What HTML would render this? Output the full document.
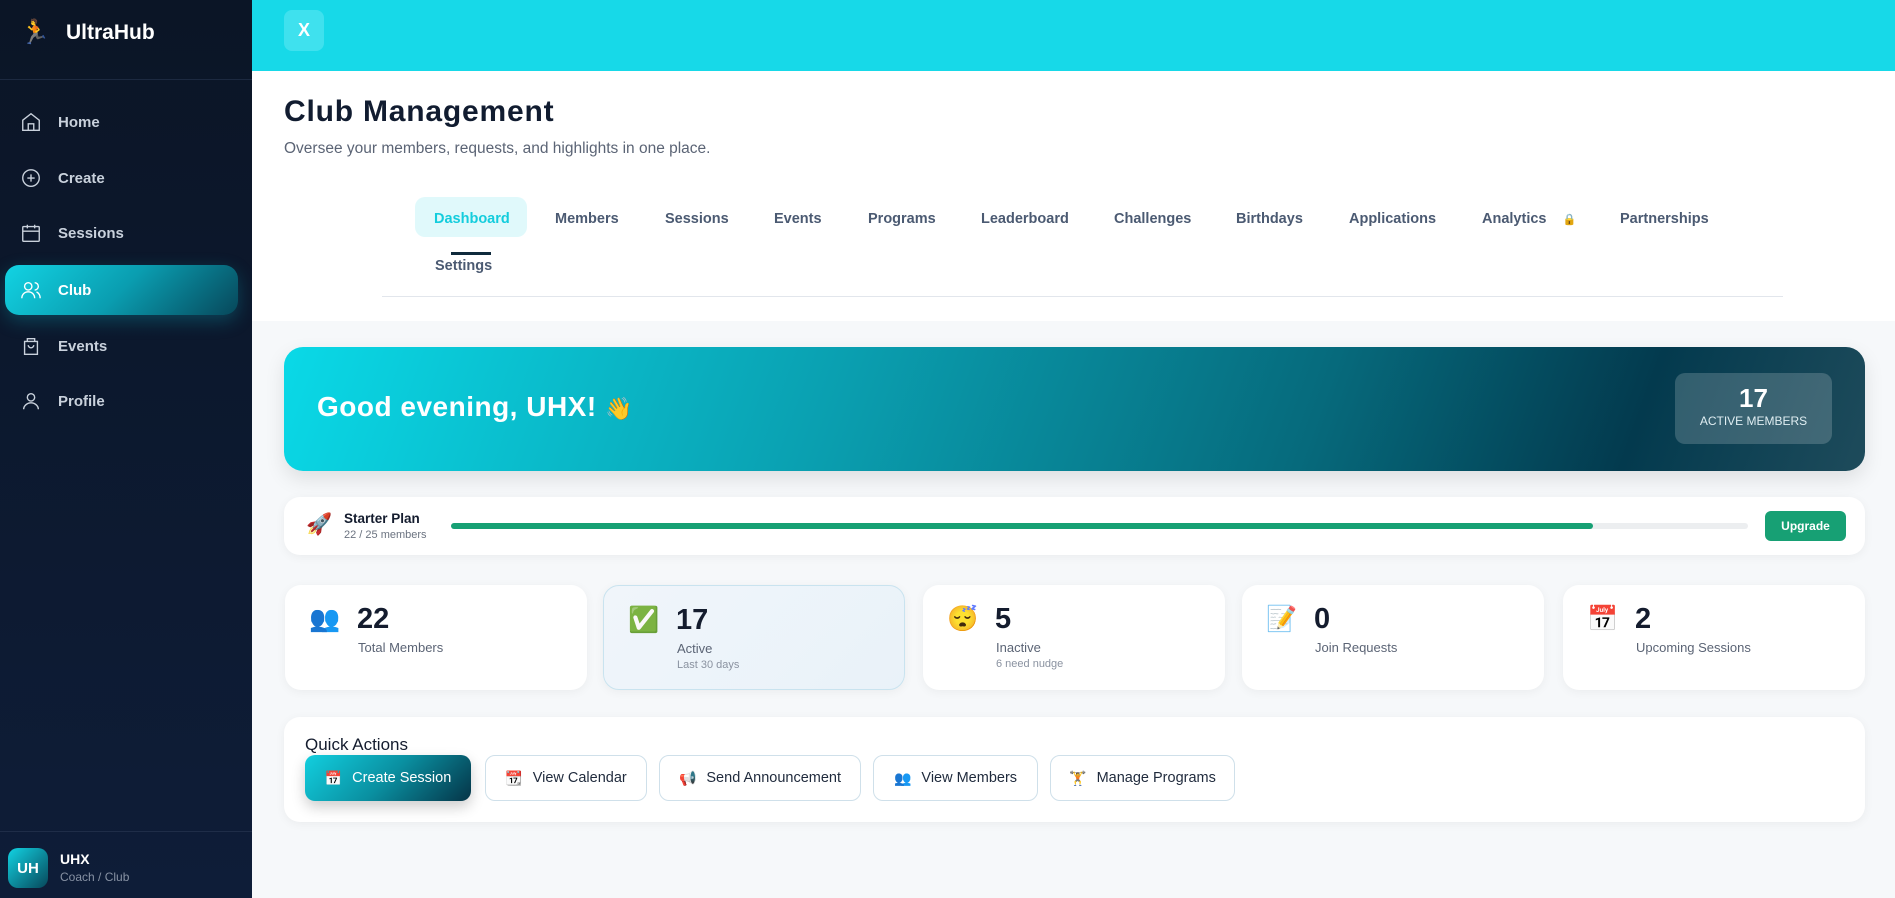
<!DOCTYPE html>
<html><head><meta charset="utf-8"><style>
*{box-sizing:border-box;margin:0;padding:0}
body{width:1895px;height:898px;overflow:hidden;background:#f6f8fa;font-family:"Liberation Sans",sans-serif;position:relative}
.a{position:absolute}
#sb{left:0;top:0;width:252px;height:898px;background:linear-gradient(180deg,#0b1526,#0e1d38)}
.nav{position:absolute;left:20px;color:#c9d1dc;font-weight:bold;font-size:15px;display:flex;align-items:center;gap:16px}
.nav svg{width:22px;height:22px;stroke:#c9d1dc;fill:none;stroke-width:1.5}
.tab{position:absolute;top:211px;font-size:14.5px;font-weight:bold;color:#4b5a72}
.card{position:absolute;background:#fff;border-radius:16px;box-shadow:0 2px 10px rgba(0,0,0,.05)}
.stat{top:585px;width:302px;height:105px}
.stat .ic{position:absolute;left:24px;top:20px;font-size:25px;font-family:"Noto Color Emoji","DejaVu Sans",sans-serif}
.stat .n{position:absolute;left:72px;top:18px;font-size:29px;font-weight:bold;color:#141c2e}
.stat .l{position:absolute;left:73px;top:55px;font-size:13px;color:#5b6475}
.stat .s{position:absolute;left:73px;top:73px;font-size:11px;color:#8a92a0}
.btn{position:absolute;top:755px;height:46px;border:1px solid #cfe0ea;border-radius:10px;background:#fff;display:flex;align-items:center;justify-content:center;gap:10px;font-size:14.5px;color:#1f2a3c}
</style></head><body>
<div id="sb" class="a">
 <div class="a" style="left:20px;top:18px;font-size:24px">🏃</div>
 <div class="a" style="left:66px;top:21px;color:#fff;font-weight:bold;font-size:21px">UltraHub</div>
 <div class="a" style="left:0;top:79px;width:252px;height:1px;background:#1c2940"></div>
 <div class="nav" style="top:111px"><svg viewBox="0 0 24 24"><path d="M3 10l9-7 9 7v11H3z"/><path d="M9 21v-7h6v7"/></svg>Home</div>
 <div class="nav" style="top:167px"><svg viewBox="0 0 24 24"><circle cx="12" cy="12" r="9"/><path d="M12 8v8M8 12h8"/></svg>Create</div>
 <div class="nav" style="top:222px"><svg viewBox="0 0 24 24"><rect x="3" y="5" width="18" height="16" rx="1"/><path d="M3 10h18M8 3v4M16 3v4"/></svg>Sessions</div>
 <div class="a" style="left:5px;top:265px;width:233px;height:50px;border-radius:14px;background:linear-gradient(135deg,#12d3e3 0%,#0a9db0 50%,#07475a 100%);box-shadow:0 6px 18px rgba(10,200,220,.25)"></div>
 <div class="nav" style="top:279px;color:#fff"><svg viewBox="0 0 24 24" style="stroke:#fff"><circle cx="9" cy="8" r="4"/><path d="M2 21c0-4 3-7 7-7s7 3 7 7M16 4a4 4 0 010 8M18 14c2 1 4 3 4 7"/></svg>Club</div>
 <div class="nav" style="top:335px"><svg viewBox="0 0 24 24"><path d="M5 7h14v14H5zM8 7V4h8v3M9 11a3 3 0 006 0"/></svg>Events</div>
 <div class="nav" style="top:390px"><svg viewBox="0 0 24 24"><circle cx="12" cy="8" r="4"/><path d="M4 21c0-4 4-7 8-7s8 3 8 7"/></svg>Profile</div>
 <div class="a" style="left:0;top:831px;width:252px;height:1px;background:#1f2d48"></div>
 <div class="a" style="left:8px;top:848px;width:40px;height:40px;border-radius:10px;background:linear-gradient(135deg,#12d3e3,#07475a);color:#fff;font-weight:bold;font-size:15px;display:flex;align-items:center;justify-content:center">UH</div>
 <div class="a" style="left:60px;top:851px;color:#fff;font-weight:bold;font-size:14px">UHX</div>
 <div class="a" style="left:60px;top:870px;color:#8792a4;font-size:12px">Coach / Club</div>
</div>
<div class="a" style="left:252px;top:0;width:1643px;height:71px;background:#17d9e8"></div>
<div class="a" style="left:284px;top:10px;width:40px;height:41px;border-radius:8px;background:#3fe1ee;color:#fff;font-weight:bold;font-size:18px;display:flex;align-items:center;justify-content:center">X</div>
<div class="a" style="left:252px;top:71px;width:1643px;height:250px;background:#fff"></div>
<div class="a" style="left:284px;top:95px;font-size:30px;font-weight:bold;color:#111c30;letter-spacing:0.8px">Club Management</div>
<div class="a" style="left:284px;top:140px;font-size:15.5px;color:#5b6475">Oversee your members, requests, and highlights in one place.</div>
<div class="a" style="left:415px;top:197px;width:112px;height:40px;border-radius:10px;background:#e0f9fb"></div>
<div class="tab" style="left:434px;color:#14cddd">Dashboard</div>
<div class="tab" style="left:555px">Members</div>
<div class="tab" style="left:665px">Sessions</div>
<div class="tab" style="left:774px">Events</div>
<div class="tab" style="left:868px">Programs</div>
<div class="tab" style="left:981px">Leaderboard</div>
<div class="tab" style="left:1114px">Challenges</div>
<div class="tab" style="left:1236px">Birthdays</div>
<div class="tab" style="left:1349px">Applications</div>
<div class="tab" style="left:1482px">Analytics <span style="font-size:11px;margin-left:12px">🔒</span></div>
<div class="tab" style="left:1620px">Partnerships</div>
<div class="a" style="left:451px;top:252px;width:40px;height:3px;background:#0f2a3c"></div>
<div class="tab" style="left:435px;top:258px">Settings</div>
<div class="a" style="left:382px;top:296px;width:1401px;height:1px;background:#e2e6ec"></div>

<div class="a" style="left:284px;top:347px;width:1581px;height:124px;border-radius:19px;background:linear-gradient(110deg,#0ad9e7 0%,#0a9fb0 35%,#066a7c 65%,#033a4e 85%,#1e4b5b 100%);box-shadow:0 8px 20px rgba(0,0,0,.1)"></div>
<div class="a" style="left:317px;top:391px;font-size:28px;font-weight:bold;color:#fff;letter-spacing:0.5px">Good evening, UHX! <span style="font-size:22px">👋</span></div>
<div class="a" style="left:1675px;top:373px;width:157px;height:71px;border-radius:10px;background:rgba(255,255,255,.18);color:#fff;text-align:center">
 <div style="font-size:26px;font-weight:bold;margin-top:10px">17</div>
 <div style="font-size:12px;color:#e0eef2">ACTIVE MEMBERS</div></div>

<div class="card" style="left:284px;top:497px;width:1581px;height:58px"></div>
<div class="a" style="left:306px;top:513px;font-size:21px">🚀</div>
<div class="a" style="left:344px;top:511px;font-size:13.5px;color:#141c2e;font-weight:bold">Starter Plan</div>
<div class="a" style="left:344px;top:529px;font-size:11px;color:#6b7380">22 / 25 members</div>
<div class="a" style="left:451px;top:523px;width:1297px;height:6px;border-radius:3px;background:#eceef0"></div>
<div class="a" style="left:451px;top:523px;width:1142px;height:6px;border-radius:3px;background:#17a074"></div>
<div class="a" style="left:1765px;top:511px;width:81px;height:30px;border-radius:6px;background:#17a074;color:#fff;font-size:12px;font-weight:bold;display:flex;align-items:center;justify-content:center">Upgrade</div>

<div class="card stat" style="left:285px"><div class="ic">👥</div><div class="n">22</div><div class="l">Total Members</div></div>
<div class="card stat" style="left:603px;background:linear-gradient(135deg,#f0f5fa,#e9f2f9);border:1px solid #c9e3ef"><div class="ic">✅</div><div class="n">17</div><div class="l">Active</div><div class="s">Last 30 days</div></div>
<div class="card stat" style="left:923px"><div class="ic">😴</div><div class="n">5</div><div class="l">Inactive</div><div class="s">6 need nudge</div></div>
<div class="card stat" style="left:1242px"><div class="ic">📝</div><div class="n">0</div><div class="l">Join Requests</div></div>
<div class="card stat" style="left:1563px"><div class="ic">📅</div><div class="n">2</div><div class="l">Upcoming Sessions</div></div>

<div class="card" style="left:284px;top:717px;width:1581px;height:105px"></div>
<div class="a" style="left:305px;top:735px;font-size:17px;color:#141c2e">Quick Actions</div>
<div class="btn" style="left:305px;width:166px;border:none;color:#fff;background:linear-gradient(135deg,#12cfdf,#0a8fa0 50%,#053447);box-shadow:0 6px 14px rgba(0,0,0,.2)"><span style="font-size:14px">📅</span>Create Session</div>
<div class="btn" style="left:485px;width:162px"><span style="font-size:14px">📆</span>View Calendar</div>
<div class="btn" style="left:659px;width:202px"><span style="font-size:14px">📢</span>Send Announcement</div>
<div class="btn" style="left:873px;width:165px"><span style="font-size:14px">👥</span>View Members</div>
<div class="btn" style="left:1050px;width:185px"><span style="font-size:14px">🏋</span>Manage Programs</div>
</body></html>
